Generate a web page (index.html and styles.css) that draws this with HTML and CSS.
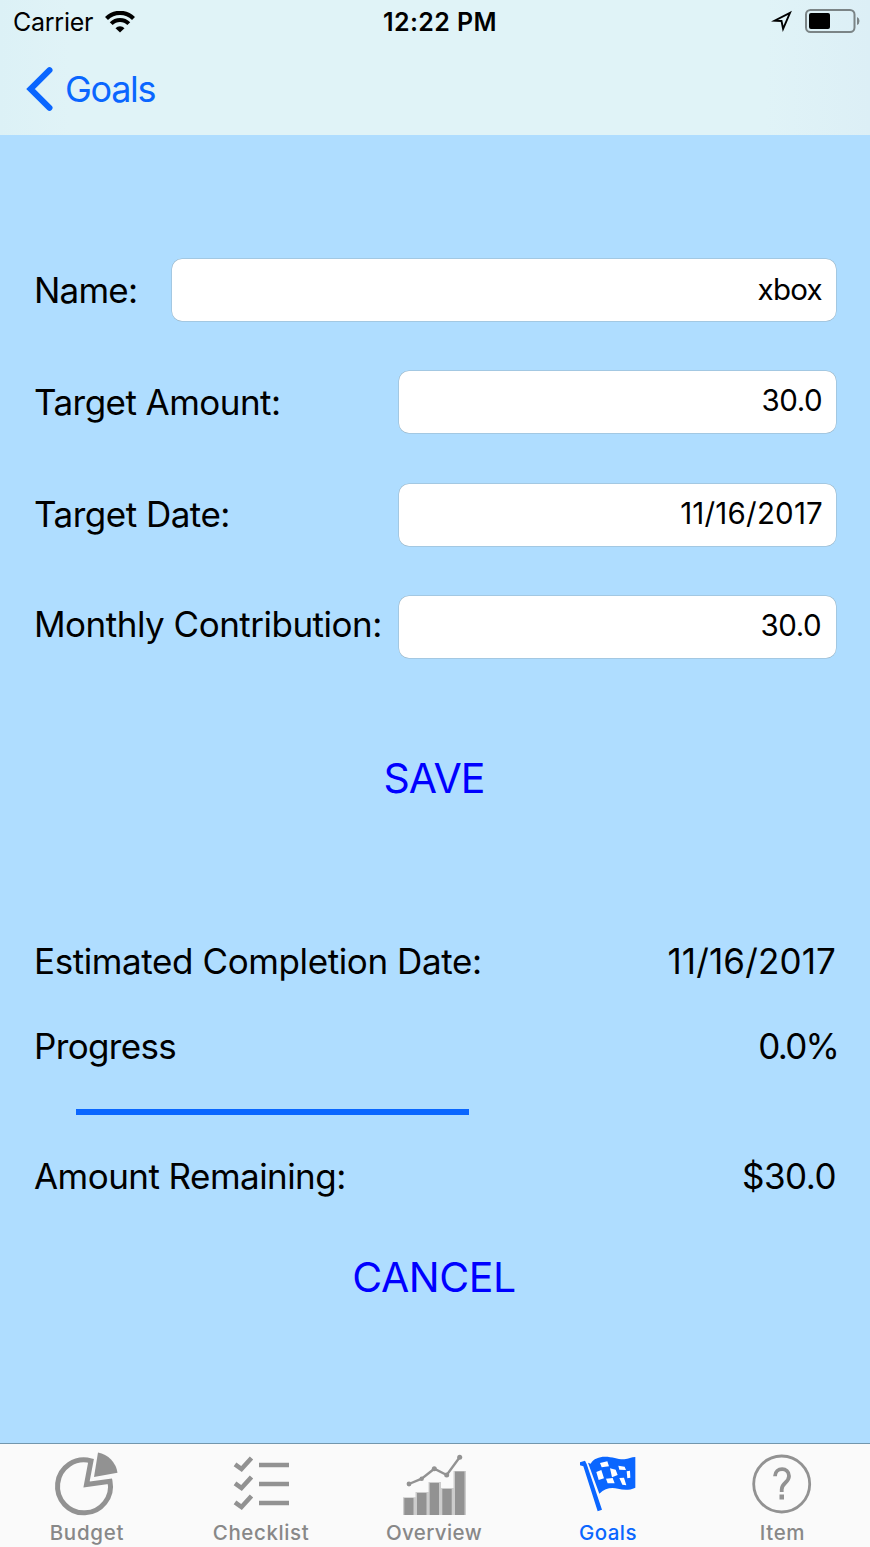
FILE: index.html
```html
<!DOCTYPE html>
<html lang="en">
<head>
<meta charset="utf-8">
<title>Goals</title>
<link rel="stylesheet" href="styles.css">
</head>
<body>
<div class="screen">
  <header class="top">
    <div class="status">
      <div class="status-left">
        <span class="carrier">Carrier</span>
        <svg class="wifi" width="30" height="22" viewBox="0 0 30 22" fill="none" stroke="#000">
          <path d="M1.500 7.400a19.200 19.200 0 0 1 27 0" stroke-width="4.200"/>
          <path d="M6.200 12.700a12.300 12.300 0 0 1 17.600 0" stroke-width="4"/>
          <path d="M10.500 17.200a6.300 6.300 0 0 1 9 0L15 21.500z" fill="#000" stroke="none"/>
        </svg>
      </div>
      <div class="time">12:22 PM</div>
      <div class="status-right">
        <svg class="location" width="22" height="25" viewBox="0 0 22 25" fill="none" stroke="#000" stroke-width="1.900">
          <path d="M19 3.800L3.500 11.700L10.500 12L12.100 19.800z" stroke-miterlimit="8"/>
        </svg>
        <svg class="battery" width="56" height="25" viewBox="0 0 56 25">
          <rect x="1" y="1" width="48.500" height="22" rx="4.500" fill="none" stroke="#7b8486" stroke-width="2"/>
          <rect x="4" y="4" width="21" height="16" rx="2"/>
          <path d="M52 8q2.500 1 2.500 4t-2.500 4z" fill="#7b8486"/>
        </svg>
      </div>
    </div>
    <nav class="back">
      <svg width="27" height="46" viewBox="0 0 27 46" fill="none" stroke="#0a66ff" stroke-width="6" stroke-linecap="round" stroke-linejoin="miter">
        <path d="M23.500 4.200L4.500 23L23.500 41.800"/>
      </svg>
      <span class="back-label">Goals</span>
    </nav>
  </header>

  <main class="content">
    <form class="form">
      <div class="row"><span class="label l-name">Name:</span><div class="field wide v-name"><span>xbox</span></div></div>
      <div class="row"><span class="label l-amount">Target Amount:</span><div class="field v-amount"><span>30.0</span></div></div>
      <div class="row"><span class="label l-date">Target Date:</span><div class="field v-date"><span>11/16/2017</span></div></div>
      <div class="row"><span class="label l-monthly">Monthly Contribution:</span><div class="field v-monthly"><span>30.0</span></div></div>
    </form>
    <div class="action save"><span>SAVE</span></div>
    <section class="summary">
      <div class="line"><span class="s-est">Estimated Completion Date:</span><span class="s-date">11/16/2017</span></div>
      <div class="line progress"><span class="s-prog">Progress</span><span class="s-pct">0.0%</span></div>
      <div class="bar"></div>
      <div class="line"><span class="s-rem">Amount Remaining:</span><span class="s-amt">$30.0</span></div>
    </section>
    <div class="action cancel"><span>CANCEL</span></div>
  </main>

  <footer class="tabs">
    <div class="tab">
      <svg width="70" height="66" viewBox="0 0 70 66">
        <path d="M39 10.800A26.500 26.500 0 1 0 58 31.200L34.500 34.500z" fill="none" stroke="#929292" stroke-width="5"/>
        <path d="M46 2.500A24 24 0 0 1 65.500 22.800L42 27z" fill="#929292"/>
      </svg>
      <span class="t-budget">Budget</span>
    </div>
    <div class="tab">
      <svg width="70" height="66" viewBox="0 0 70 66" fill="none" stroke="#929292">
        <path d="M9 14.300l6.500 4.700L25.500 8M9 33.300l6.500 4.700L25.500 27M9 52.300l6.500 4.700L25.500 46" stroke-width="4.600"/>
        <path d="M33 15h30M33 34h30M33 53h30" stroke-width="4.400"/>
      </svg>
      <span class="t-check">Checklist</span>
    </div>
    <div class="tab">
      <svg width="70" height="66" viewBox="0 0 70 66">
        <path d="M3 47.200h12.500V65H3zM15.500 42h13v23h-13zM28.500 32h12.500v33H28.500zM41 38h12.500v27H41zM53.500 21h12.500v44H53.500z" fill="#ccc"/>
        <path d="M4.300 48h9.200v17H4.300zM17 43h9.500v22H17zM29.700 33h9.300v32h-9.300zM42.300 39h9.400v26h-9.400zM55 21.500h9.500V65H55z" fill="#929292"/>
        <path d="M9 34l12.700-5.300L34.300 18.700l12.400 6.300L59.700 7.300" fill="none" stroke="#929292" stroke-width="2.400"/>
        <g fill="#929292"><circle cx="9" cy="34" r="2.400"/><circle cx="21.700" cy="28.700" r="2.200"/><circle cx="34.300" cy="18.700" r="2.500"/><circle cx="46.700" cy="25" r="2.500"/><circle cx="59.700" cy="7.300" r="2.500"/></g>
      </svg>
      <span class="t-over">Overview</span>
    </div>
    <div class="tab active">
      <svg width="70" height="66" viewBox="0 0 70 66">
        <g transform="translate(2 2) scale(.3333)" fill="#0a66ff">
          <path d="M12 31L27 26L32 36L78 173L65 178L22 43L12 40z"/>
          <path d="M36 32L44 35C52 20 70 14 86 14C112 14 125 23 145 22C158 21 166 15 178 15V107C158 116 142 114 126 110C106 105 88 108 70 125z"/>
          <path d="M72 33L94 28L99 43L77 46zM61 60L76 54L84 79L68 84zM102 49L119 53L125 69L108 76zM90 80L110 78L116 94L95 94zM127 41L146 44L150 54L130 53zM152 58L162 56L163 77L154 79zM130 78L144 77L151 100L139 98z" fill="#fff"/>
        </g>
      </svg>
      <span class="t-goals">Goals</span>
    </div>
    <div class="tab">
      <svg width="70" height="66" viewBox="0 0 70 66" fill="none" stroke="#929292">
        <circle cx="33.700" cy="34" r="28" stroke-width="2.800"/>
        <path d="M27 26.200c.2-9.200 14-9.400 14-.2 0 7-7.300 6.500-7.300 13.500v2.500" stroke-width="3.800"/>
        <path d="M31.500 44.500h4.500v5h-4.500z" fill="#929292" stroke="none"/>
      </svg>
      <span class="t-item">Item</span>
    </div>
  </footer>
</div>
</body>
</html>
```
FILE: styles.css
```css
* { box-sizing: border-box; }
body { margin: 0; font-family: Inter, "Liberation Sans", sans-serif; color: #000; }
svg { display: block; flex: none; }
span { white-space: nowrap; }
.screen { width: 870px; height: 1547px; display: flex; flex-direction: column; background: #afddff; overflow: hidden; }

.top { height: 135px; background: linear-gradient(90deg, #dcf1f6 0, #e0f3f7 8%, #e0f3f7 88%, #dceff6 100%); }
.status { height: 43px; display: grid; grid-template-columns: 1fr auto 1fr; align-items: center; padding: 0 9px 0 13px; }
.status-left { display: flex; align-items: center; gap: 12px; }
.carrier { font-size: 25px; letter-spacing: -.25px; padding-top: 1px; }
.time { font-size: 25px; font-weight: 600; letter-spacing: .4px; padding: 1px 0 0 6px; }
.status-right { display: flex; justify-content: flex-end; gap: 12px; }
.back { height: 91px; display: flex; align-items: center; gap: 12px; padding-left: 26px; color: #0a66ff; }
.back-label { font-size: 36px; letter-spacing: -1.300px; }

.content { height: 1308px; display: flex; flex-direction: column; padding: 124px 34px 0; font-size: 35px; }
.form { display: flex; flex-direction: column; gap: 50px; }
.row { height: 62.300px; display: flex; justify-content: space-between; align-items: center; }
.label { line-height: 62px; }
.l-name { letter-spacing: -.8px; }
.l-amount { letter-spacing: -.55px; }
.l-date { letter-spacing: -.5px; padding-bottom: 2px; }
.l-monthly { letter-spacing: -.5px; padding-bottom: 6px; }
.field { width: 437px; height: 62px; display: flex; align-items: center; justify-content: flex-end; padding: 0 14px 3px 0; background: #fff; border-radius: 10px; box-shadow: 0 0 0 .5px #98b4c6; font-size: 29.500px; line-height: 40px; }
.wide { width: 664px; }
.v-name { letter-spacing: -.7px; }
.v-amount { letter-spacing: -.5px; padding-bottom: 4px; }
.v-date { letter-spacing: .2px; padding-right: 13px; }
.v-monthly { letter-spacing: -.5px; padding: 0 15px 4px 0; }
.action { display: flex; justify-content: center; color: #00f; font-size: 41px; line-height: 50px; }
.save { margin-top: 95px; letter-spacing: -.9px; padding-right: 2px; }
.summary { margin-top: 133px; }
.line { height: 50px; line-height: 50px; display: flex; justify-content: space-between; }
.s-est { letter-spacing: -.4px; }
.s-date { letter-spacing: .15px; }
.s-prog { letter-spacing: -.65px; }
.s-pct { letter-spacing: -1.800px; margin-right: -2px; }
.s-rem { letter-spacing: -.55px; }
.s-amt { letter-spacing: -.5px; }
.progress { margin-top: 35px; }
.bar { width: 393px; height: 6px; margin: 38px 0 36px 42px; background: #0a66ff; }
.cancel { margin-top: 51px; letter-spacing: -.4px; padding-right: 2px; }

.tabs { height: 104px; display: grid; grid-template-columns: repeat(5, 1fr); background: #fafafa; border-top: 1px solid #7296ad; }
.tab { display: flex; flex-direction: column; align-items: center; padding-top: 6px; font-size: 20.500px; font-weight: 500; line-height: 26px; color: #888; }
.tab span { margin-top: 4px; }
.t-budget { letter-spacing: .75px; }
.t-check { letter-spacing: .6px; }
.t-over { letter-spacing: .4px; margin-right: 2px; }
.t-goals { letter-spacing: .4px; margin-right: 2px; }
.t-item { letter-spacing: .6px; margin-right: 1px; }
.active { color: #0a66ff; }
```
